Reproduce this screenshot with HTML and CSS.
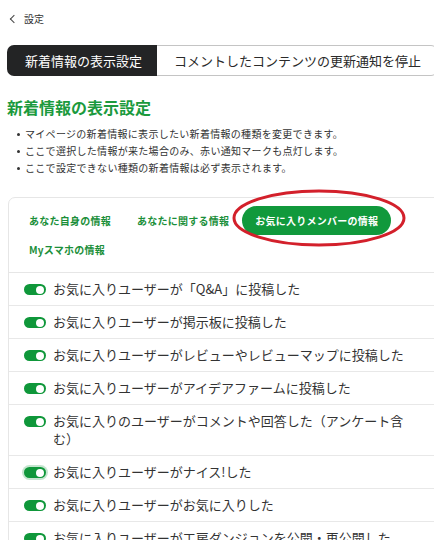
FILE: index.html
```html
<!DOCTYPE html>
<html lang="ja">
<head>
<meta charset="utf-8">
<link rel="stylesheet" href="styles.css">
</head>
<body>
<div class="page">
  <div class="back"><span class="chev"></span><span>設定</span></div>
  <div class="tabs">
    <div class="tab active">新着情報の表示設定</div>
    <div class="tab">コメントしたコンテンツの更新通知を停止</div>
  </div>
  <h1 class="title">新着情報の表示設定</h1>
  <ul class="notes">
    <li>マイページの新着情報に表示したい新着情報の種類を変更できます。</li>
    <li>ここで選択した情報が来た場合のみ、赤い通知マークも点灯します。</li>
    <li>ここで設定できない種類の新着情報は必ず表示されます。</li>
  </ul>
  <div class="card">
    <div class="chips">
      <span class="chip">あなた自身の情報</span>
      <span class="chip">あなたに関する情報</span>
      <span class="chip on">お気に入りメンバーの情報</span>
      <span class="chip">Myスマホの情報</span>
      <svg class="circle" width="174" height="58" viewBox="0 0 174 58"><ellipse cx="87" cy="29" rx="85" ry="27" fill="none" stroke="#d3202b" stroke-width="3"/></svg>
    </div>
    <div class="row"><span class="tg"></span><span class="lbl">お気に入りユーザーが「Q&amp;A」に投稿した</span></div>
    <div class="row"><span class="tg"></span><span class="lbl">お気に入りユーザーが掲示板に投稿した</span></div>
    <div class="row"><span class="tg"></span><span class="lbl">お気に入りユーザーがレビューやレビューマップに投稿した</span></div>
    <div class="row"><span class="tg"></span><span class="lbl">お気に入りユーザーがアイデアファームに投稿した</span></div>
    <div class="row"><span class="tg"></span><span class="lbl">お気に入りのユーザーがコメントや回答した（アンケート含む）</span></div>
    <div class="row"><span class="tg focus"></span><span class="lbl">お気に入りユーザーがナイス!した</span></div>
    <div class="row"><span class="tg"></span><span class="lbl">お気に入りユーザーがお気に入りした</span></div>
    <div class="row"><span class="tg"></span><span class="lbl">お気に入りユーザーが工房ダンジョンを公開・再公開した</span></div>
  </div>
</div>
</body>
</html>
```
FILE: styles.css
```css
html, body {
  margin: 0;
  padding: 0;
  overflow: hidden;
  background: #fff;
}
body {
  font-family: "Noto Sans CJK JP", "Noto Sans", sans-serif;
  color: #333;
}
.page {
  padding: 10px 1px 0 7px;
}
.back {
  display: flex;
  align-items: center;
  gap: 7px;
  font-size: 10px;
  line-height: 18px;
  padding-left: 4px;
  color: #333;
}
.chev {
  width: 5px;
  height: 5px;
  border-left: 1.3px solid #444;
  border-bottom: 1.3px solid #444;
  transform: rotate(45deg);
}
.tabs {
  display: flex;
  margin-top: 17px;
  height: 31px;
}
.tab {
  display: flex;
  align-items: center;
  font-size: 13px;
  padding: 0 16px 0 17px;
  border: 1px solid #c4c4c4;
  border-left: none;
  border-radius: 0 7px 7px 0;
  color: #2a2a2a;
  flex: 1;
  white-space: nowrap;
}
.tab.active {
  flex: none;
  width: 150px;
  box-sizing: border-box;
  padding: 0 0 0 18px;
  background: #232425;
  color: #fff;
  border: none;
  border-radius: 7px 0 0 7px;
}
.title {
  margin: 20px 0 0;
  font-size: 16px;
  line-height: 22px;
  font-weight: 700;
  color: #1b9a3d;
}
.notes {
  margin: 7px 0 0;
  padding: 0 0 0 10px;
  list-style: none;
  font-size: 10px;
  letter-spacing: 0.3px;
  line-height: 17px;
  color: #333;
}
.notes li::before {
  content: "";
  display: inline-block;
  width: 3px;
  height: 3px;
  border-radius: 50%;
  background: #333;
  margin-right: 5px;
  vertical-align: middle;
  position: relative;
  top: -1px;
}
.card {
  margin-top: 21px;
  margin-left: 1px;
  margin-right: -30px;
  border: 1px solid #e6e6e6;
  border-radius: 7px;
}
.chips {
  position: relative;
  display: flex;
  flex-wrap: wrap;
  padding: 8px 8px 8px 7px;
  border-bottom: 1px solid #e6e6e6;
}
.chip {
  display: inline-flex;
  align-items: center;
  height: 29px;
  padding: 0 13px;
  font-size: 10px;
  letter-spacing: 0.25px;
  font-weight: 700;
  color: #1b8f3a;
  white-space: nowrap;
}
.chip.on {
  background: #11993c;
  color: #fff;
  border-radius: 15px;
}
.circle {
  position: absolute;
  left: 223px;
  top: -9px;
}
.row {
  display: flex;
  align-items: flex-start;
  padding: 7px 50px 7px 15px;
  border-bottom: 1px solid #e8e8e8;
  font-size: 13px;
  line-height: 18px;
  color: #333;
}
.tg {
  flex: none;
  position: relative;
  width: 22px;
  height: 11px;
  margin-top: 4px;
  margin-right: 7px;
  border-radius: 6px;
  background: #0f973a;
}
.tg::after {
  content: "";
  position: absolute;
  right: 2px;
  top: 1.5px;
  width: 8px;
  height: 8px;
  border-radius: 50%;
  background: #fff;
}
.tg.focus {
  box-shadow: 0 0 0 2px rgba(19, 153, 61, 0.25);
}
.lbl {
  flex: 1;
}
```
